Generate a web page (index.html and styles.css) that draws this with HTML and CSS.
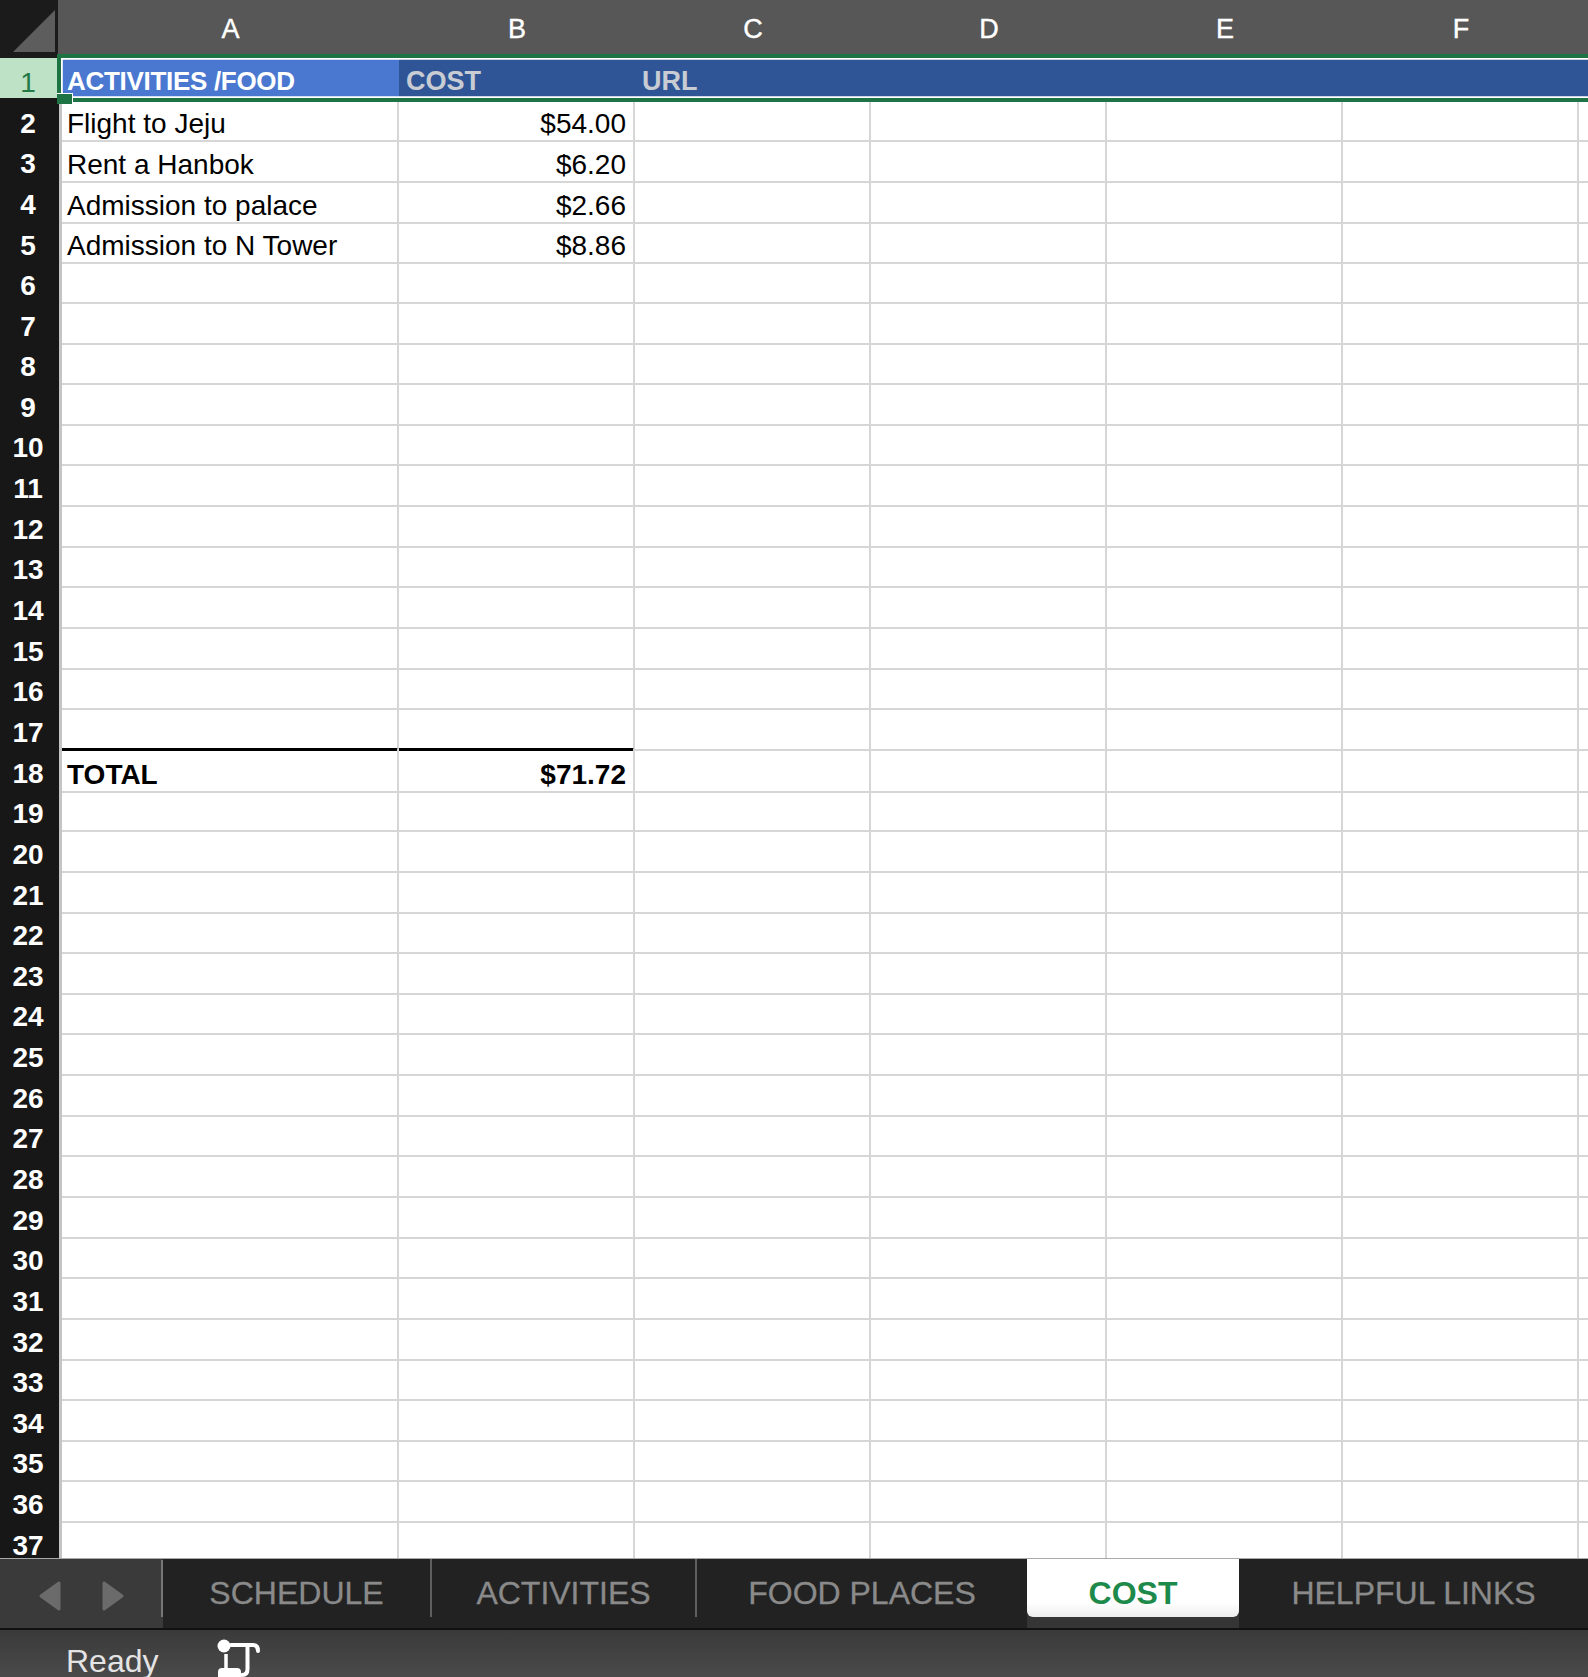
FILE: index.html
```html
<!DOCTYPE html>
<html>
<head>
<meta charset="utf-8">
<title>COST</title>
<link rel="stylesheet" href="styles.css">
</head>
<body>
<div class="app">
  <div class="sheet">
    <div class="colhead">
      <div class="corner"><svg class="tri" width="58" height="56" viewBox="0 0 58 56"><polygon points="13,52 55,52 55,10" fill="#5d5d5d"/></svg></div>
      <div class="L">A</div><div class="L">B</div><div class="L">C</div><div class="L">D</div><div class="L">E</div><div class="L">F</div><div class="L"></div>
    </div>
    <div class="row r1">
      <div class="rh">1</div>
      <div class="c a">ACTIVITIES /FOOD</div><div class="c">COST</div><div class="c">URL</div><div class="c"></div><div class="c"></div><div class="c"></div><div class="c"></div>
      <div class="sel"></div>
      <div class="handle"></div>
    </div>
    <div class="row"><div class="rh">2</div><div class="c">Flight to Jeju</div><div class="c num">$54.00</div><div class="c"></div><div class="c"></div><div class="c"></div><div class="c"></div><div class="c"></div></div>
    <div class="row"><div class="rh">3</div><div class="c">Rent a Hanbok</div><div class="c num">$6.20</div><div class="c"></div><div class="c"></div><div class="c"></div><div class="c"></div><div class="c"></div></div>
    <div class="row"><div class="rh">4</div><div class="c">Admission to palace</div><div class="c num">$2.66</div><div class="c"></div><div class="c"></div><div class="c"></div><div class="c"></div><div class="c"></div></div>
    <div class="row"><div class="rh">5</div><div class="c">Admission to N Tower</div><div class="c num">$8.86</div><div class="c"></div><div class="c"></div><div class="c"></div><div class="c"></div><div class="c"></div></div>
    <div class="row"><div class="rh">6</div><div class="c"></div><div class="c"></div><div class="c"></div><div class="c"></div><div class="c"></div><div class="c"></div><div class="c"></div></div>
    <div class="row"><div class="rh">7</div><div class="c"></div><div class="c"></div><div class="c"></div><div class="c"></div><div class="c"></div><div class="c"></div><div class="c"></div></div>
    <div class="row"><div class="rh">8</div><div class="c"></div><div class="c"></div><div class="c"></div><div class="c"></div><div class="c"></div><div class="c"></div><div class="c"></div></div>
    <div class="row"><div class="rh">9</div><div class="c"></div><div class="c"></div><div class="c"></div><div class="c"></div><div class="c"></div><div class="c"></div><div class="c"></div></div>
    <div class="row"><div class="rh">10</div><div class="c"></div><div class="c"></div><div class="c"></div><div class="c"></div><div class="c"></div><div class="c"></div><div class="c"></div></div>
    <div class="row"><div class="rh">11</div><div class="c"></div><div class="c"></div><div class="c"></div><div class="c"></div><div class="c"></div><div class="c"></div><div class="c"></div></div>
    <div class="row"><div class="rh">12</div><div class="c"></div><div class="c"></div><div class="c"></div><div class="c"></div><div class="c"></div><div class="c"></div><div class="c"></div></div>
    <div class="row"><div class="rh">13</div><div class="c"></div><div class="c"></div><div class="c"></div><div class="c"></div><div class="c"></div><div class="c"></div><div class="c"></div></div>
    <div class="row"><div class="rh">14</div><div class="c"></div><div class="c"></div><div class="c"></div><div class="c"></div><div class="c"></div><div class="c"></div><div class="c"></div></div>
    <div class="row"><div class="rh">15</div><div class="c"></div><div class="c"></div><div class="c"></div><div class="c"></div><div class="c"></div><div class="c"></div><div class="c"></div></div>
    <div class="row"><div class="rh">16</div><div class="c"></div><div class="c"></div><div class="c"></div><div class="c"></div><div class="c"></div><div class="c"></div><div class="c"></div></div>
    <div class="row"><div class="rh">17</div><div class="c bb"></div><div class="c bb"></div><div class="c"></div><div class="c"></div><div class="c"></div><div class="c"></div><div class="c"></div></div>
    <div class="row"><div class="rh">18</div><div class="c b">TOTAL</div><div class="c num b">$71.72</div><div class="c"></div><div class="c"></div><div class="c"></div><div class="c"></div><div class="c"></div></div>
    <div class="row"><div class="rh">19</div><div class="c"></div><div class="c"></div><div class="c"></div><div class="c"></div><div class="c"></div><div class="c"></div><div class="c"></div></div>
    <div class="row"><div class="rh">20</div><div class="c"></div><div class="c"></div><div class="c"></div><div class="c"></div><div class="c"></div><div class="c"></div><div class="c"></div></div>
    <div class="row"><div class="rh">21</div><div class="c"></div><div class="c"></div><div class="c"></div><div class="c"></div><div class="c"></div><div class="c"></div><div class="c"></div></div>
    <div class="row"><div class="rh">22</div><div class="c"></div><div class="c"></div><div class="c"></div><div class="c"></div><div class="c"></div><div class="c"></div><div class="c"></div></div>
    <div class="row"><div class="rh">23</div><div class="c"></div><div class="c"></div><div class="c"></div><div class="c"></div><div class="c"></div><div class="c"></div><div class="c"></div></div>
    <div class="row"><div class="rh">24</div><div class="c"></div><div class="c"></div><div class="c"></div><div class="c"></div><div class="c"></div><div class="c"></div><div class="c"></div></div>
    <div class="row"><div class="rh">25</div><div class="c"></div><div class="c"></div><div class="c"></div><div class="c"></div><div class="c"></div><div class="c"></div><div class="c"></div></div>
    <div class="row"><div class="rh">26</div><div class="c"></div><div class="c"></div><div class="c"></div><div class="c"></div><div class="c"></div><div class="c"></div><div class="c"></div></div>
    <div class="row"><div class="rh">27</div><div class="c"></div><div class="c"></div><div class="c"></div><div class="c"></div><div class="c"></div><div class="c"></div><div class="c"></div></div>
    <div class="row"><div class="rh">28</div><div class="c"></div><div class="c"></div><div class="c"></div><div class="c"></div><div class="c"></div><div class="c"></div><div class="c"></div></div>
    <div class="row"><div class="rh">29</div><div class="c"></div><div class="c"></div><div class="c"></div><div class="c"></div><div class="c"></div><div class="c"></div><div class="c"></div></div>
    <div class="row"><div class="rh">30</div><div class="c"></div><div class="c"></div><div class="c"></div><div class="c"></div><div class="c"></div><div class="c"></div><div class="c"></div></div>
    <div class="row"><div class="rh">31</div><div class="c"></div><div class="c"></div><div class="c"></div><div class="c"></div><div class="c"></div><div class="c"></div><div class="c"></div></div>
    <div class="row"><div class="rh">32</div><div class="c"></div><div class="c"></div><div class="c"></div><div class="c"></div><div class="c"></div><div class="c"></div><div class="c"></div></div>
    <div class="row"><div class="rh">33</div><div class="c"></div><div class="c"></div><div class="c"></div><div class="c"></div><div class="c"></div><div class="c"></div><div class="c"></div></div>
    <div class="row"><div class="rh">34</div><div class="c"></div><div class="c"></div><div class="c"></div><div class="c"></div><div class="c"></div><div class="c"></div><div class="c"></div></div>
    <div class="row"><div class="rh">35</div><div class="c"></div><div class="c"></div><div class="c"></div><div class="c"></div><div class="c"></div><div class="c"></div><div class="c"></div></div>
    <div class="row"><div class="rh">36</div><div class="c"></div><div class="c"></div><div class="c"></div><div class="c"></div><div class="c"></div><div class="c"></div><div class="c"></div></div>
    <div class="row"><div class="rh">37</div><div class="c"></div><div class="c"></div><div class="c"></div><div class="c"></div><div class="c"></div><div class="c"></div><div class="c"></div></div>
  </div>
  <div class="tabbar">
    <div class="nav">
      <svg width="163" height="70" viewBox="0 0 163 70">
        <polygon points="41,38 59,25 59,51" fill="#6b6b6b" stroke="#6b6b6b" stroke-width="3" stroke-linejoin="round"/>
        <polygon points="104,25 122,38 104,51" fill="#6b6b6b" stroke="#6b6b6b" stroke-width="3" stroke-linejoin="round"/>
      </svg>
    </div>
    <div class="tab sep w1">SCHEDULE</div>
    <div class="tab sep w2">ACTIVITIES</div>
    <div class="tab w3">FOOD PLACES</div>
    <div class="tabwrap"><div class="tab active">COST</div></div>
    <div class="tab grow">HELPFUL LINKS</div>
  </div>
  <div class="status">
    <span class="ready">Ready</span>
    <svg class="acc" width="50" height="41" viewBox="0 0 50 41">
      <circle cx="13" cy="10" r="6.5" fill="#fff"/>
      <path d="M20 9 H42 Q47 9 47 15" fill="none" stroke="#fff" stroke-width="4" stroke-linecap="round"/>
      <path d="M36.5 9 V33 Q36.5 39 31 39" fill="none" stroke="#fff" stroke-width="4" stroke-linecap="round"/>
      <path d="M15 18 V33" fill="none" stroke="#fff" stroke-width="3.5"/>
      <rect x="7" y="32" width="23" height="12" rx="4" fill="#fff"/>
    </svg>
  </div>
</div>
</body>
</html>
```
FILE: styles.css
```css
* { box-sizing: border-box; }

html, body {
  margin: 0;
  padding: 0;
}

body {
  width: 1588px;
  height: 1677px;
  overflow: hidden;
  background: #222;
  font-family: "Liberation Sans", Arial, Helvetica, sans-serif;
}

.app {
  display: flex;
  flex-direction: column;
  height: 1677px;
}

.sheet {
  flex: none;
  height: 1558px;
  overflow: hidden;
  background: #fff;
}

.colhead,
.row {
  display: grid;
  grid-template-columns: 62px 337px 236px 236px 236px 236px 236px 1fr;
}

.colhead {
  height: 57.7px;
  background: #575757;
}

.corner {
  background: #1b1b1b;
  border-right: 4px solid #575757;
}

.tri { display: block; }

.L {
  display: flex;
  align-items: center;
  justify-content: center;
  color: #fff;
  font-size: 27px;
  padding-top: 2px;
  -webkit-text-stroke: 0.4px #fff;
}

.row {
  height: 40.65px;
  position: relative;
}

.rh {
  background: #171717;
  color: #fff;
  font-weight: bold;
  font-size: 28px;
  display: flex;
  align-items: center;
  justify-content: center;
  padding-top: 9px;
  padding-right: 3px;
  border-right: 3px solid #c4c4c4;
  border-bottom: 2px solid #464646;
}

.c {
  display: flex;
  align-items: center;
  white-space: nowrap;
  font-size: 28px;
  color: #000;
  padding: 10px 7px 0 5px;
  border-right: 2px solid #d6d6d6;
  border-bottom: 2px solid #d6d6d6;
}

.num { justify-content: flex-end; }

.b { font-weight: bold; }

.bb { border-bottom: 3px solid #000; }

/* Row 1 header row (selected) */
.r1 .rh {
  background: #bde2c6;
  color: #237a45;
  font-weight: normal;
  border-bottom: none;
}

.r1 .c {
  background: #2f5597;
  color: #c9ccd3;
  font-weight: bold;
  font-size: 27px;
  border-color: #2f5597;
  padding-left: 7px;
  padding-top: 8px;
}

.r1 .c.a {
  background: #4a78d0;
  border-color: #4a78d0;
  color: #fff;
  font-size: 26px;
  letter-spacing: -0.3px;
  padding-left: 5px;
}

.sel {
  position: absolute;
  left: 57px;
  top: -3.5px;
  right: -10px;
  bottom: -3.8px;
  border: 4.5px solid #1d7343;
  box-shadow: inset 0 0 0 1.8px #fff;
  pointer-events: none;
  z-index: 3;
}

.handle {
  position: absolute;
  left: 57px;
  top: 35px;
  width: 16px;
  height: 11px;
  background: #1d7343;
  border-top: 1.5px solid #fff;
  border-right: 1.5px solid #fff;
  z-index: 4;
}

/* Sheet tabs */
.tabbar {
  flex: none;
  height: 70px;
  display: flex;
  align-items: flex-start;
  background: #222;
  border-top: 1px solid #a9a9a9;
}

.nav {
  width: 163px;
  height: 69px;
  background: #3a3a3a;
  position: relative;
  flex: none;
}

.nav svg { display: block; margin-top: -1px; }

.nav::after {
  content: "";
  position: absolute;
  right: 0;
  top: 1px;
  height: 57px;
  width: 2px;
  background: #777;
}

.tab {
  height: 58px;
  flex: none;
  display: flex;
  align-items: center;
  justify-content: center;
  font-size: 32px;
  color: #8a8a8a;
  padding-top: 10px;
  -webkit-text-stroke: 0.3px #8a8a8a;
}

.tab.sep { border-right: 2px solid #5f5f5f; }

.w1 { width: 269px; }
.w2 { width: 265px; }
.w3 { width: 330px; }

.tabwrap {
  width: 212px;
  height: 69px;
  flex: none;
  background: #353535;
}

.tab.active {
  width: 212px;
  height: 58px;
  background: linear-gradient(#ffffff 75%, #ededed);
  border-radius: 0 0 6px 6px;
  color: #1d8a4b;
  font-weight: bold;
  -webkit-text-stroke: 0;
}

.tab.grow { flex: 1; }

/* Status bar */
.status {
  flex: 1;
  display: flex;
  align-items: flex-start;
  background: linear-gradient(#3a3a3a, #4a4a4a);
  border-top: 2px solid #111;
  overflow: hidden;
}

.ready {
  font-size: 32px;
  line-height: 32px;
  color: #e4e4e4;
  margin-left: 66px;
  margin-top: 15px;
}

.acc {
  display: block;
  margin-left: 52px;
  margin-top: 6px;
  flex: none;
}
```
